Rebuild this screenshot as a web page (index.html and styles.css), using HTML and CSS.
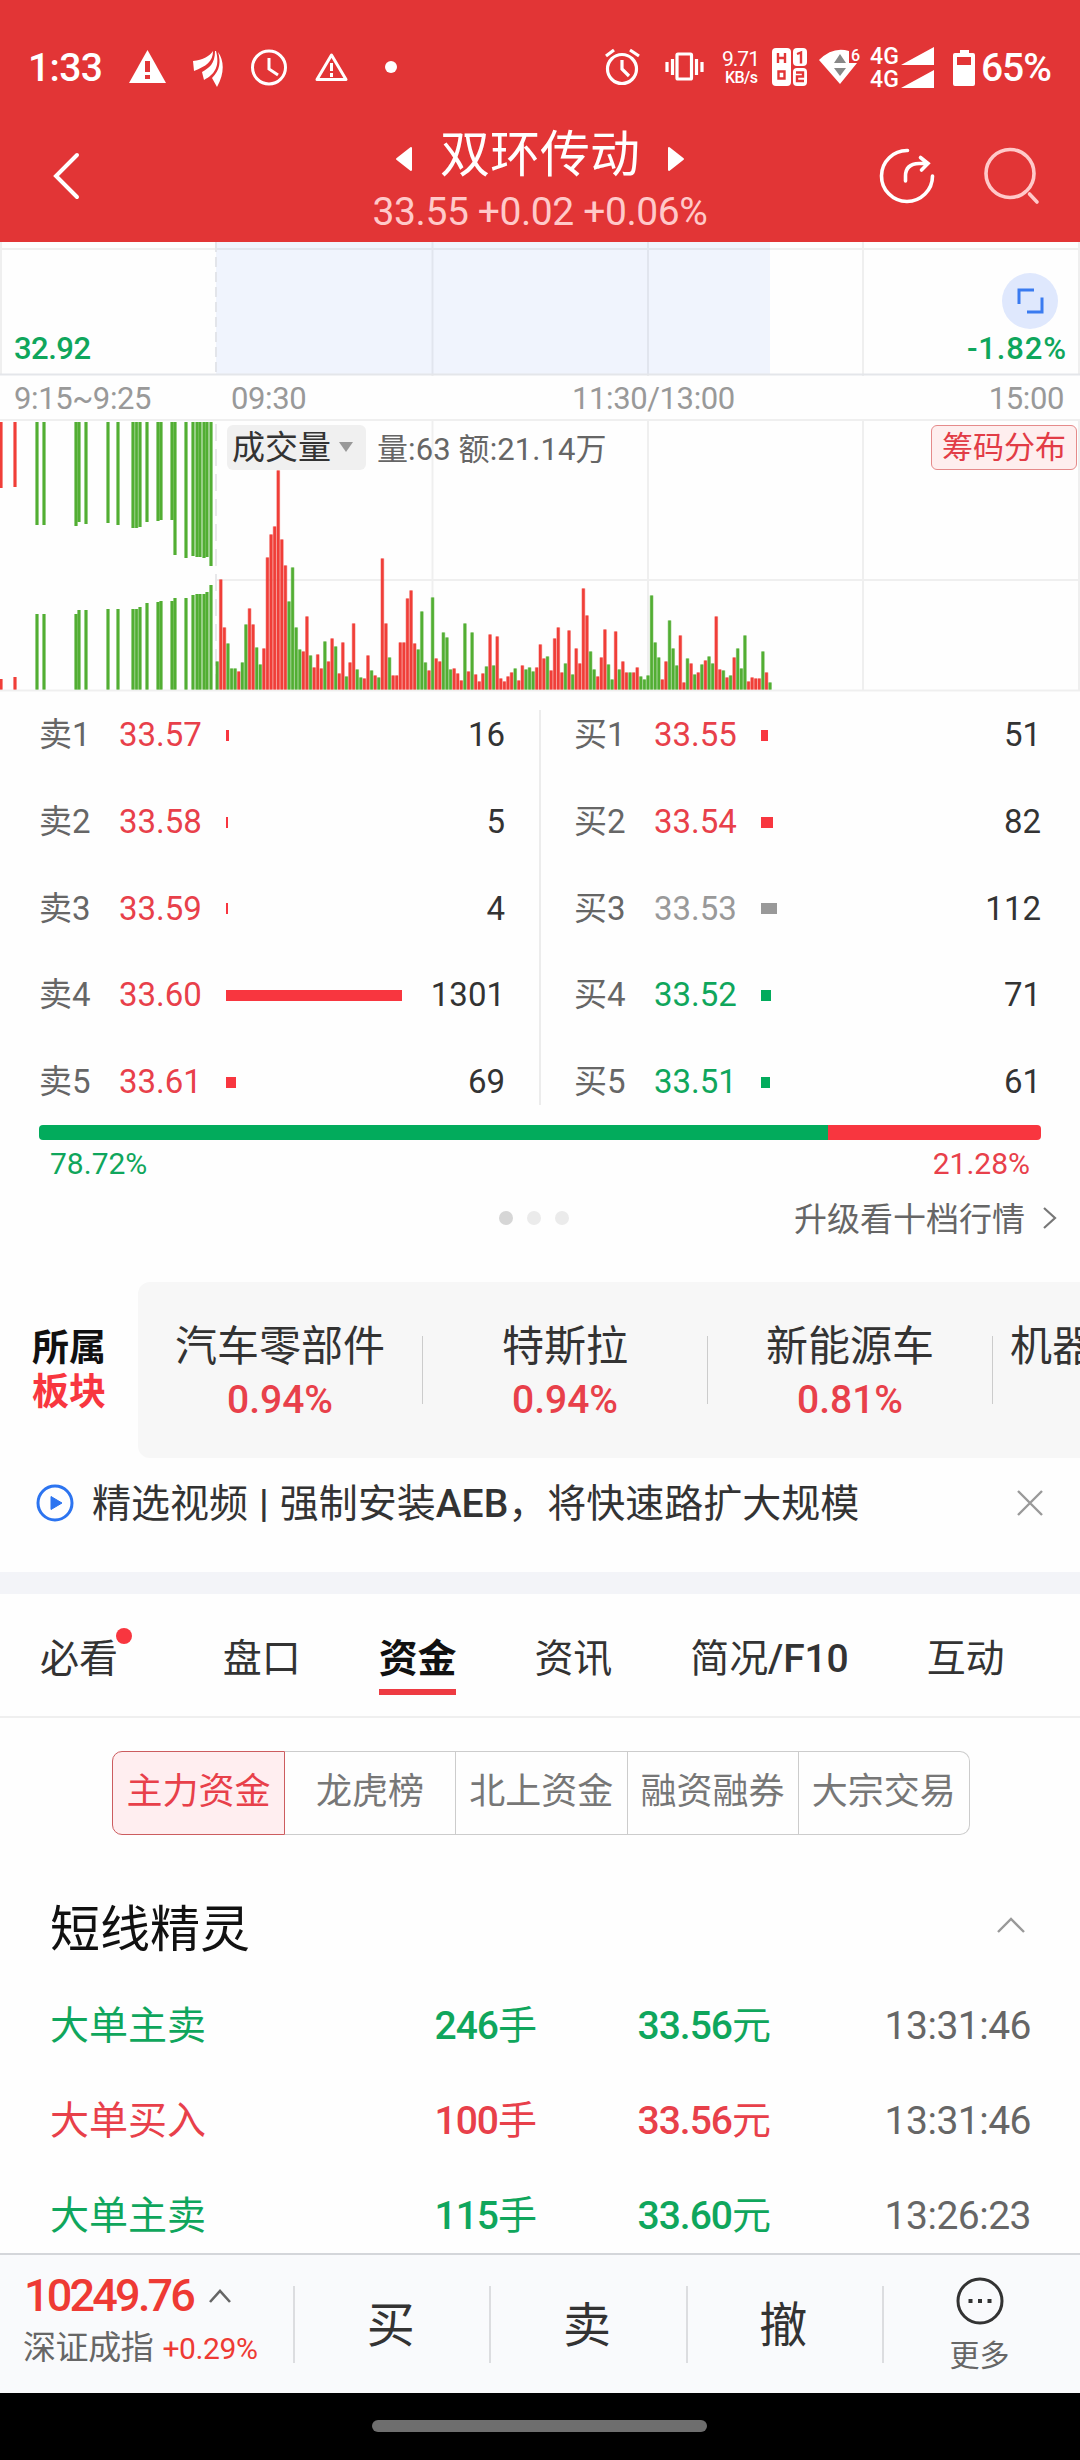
FILE: index.html
```html
<!DOCTYPE html>
<html lang="zh-CN">

<head>
  <meta charset="UTF-8">
  <meta name="viewport" content="width=device-width, initial-scale=1.0">
  <title>双环传动</title>
  <link rel="stylesheet" href="styles.css">
</head>

<body>
  <header class="header">
    <div class="status">
      <span class="time">1:33</span>
      <svg class="status_l" width="280" height="60" viewBox="124 37 280 60">
        <path d="M147.500 50 L166 83 H129 Z" fill="#fff"/>
        <path d="M145 61h5v11h-5z M145 75h5v4h-5z" fill="#e23536"/>
        <path d="M193 61 C203 60 210 56 213 51 C213 62 206 66 194 71 Z" fill="#fff"/>
        <path d="M215 51 C215 64 209 68 202 72 L204 80 C215 74 220 66 216 51 Z" fill="#fff"/>
        <path d="M218 52 C224 60 225 73 217 87 L212 78 C220 70 221 62 218 52 Z" fill="#fff"/>
        <circle cx="269" cy="67.500" r="16.500" fill="none" stroke="#fff" stroke-width="3"/>
        <path d="M269 58v11l9 6" fill="none" stroke="#fff" stroke-width="3"/>
        <path d="M331.500 55 L346 79.500 H317 Z" fill="none" stroke="#fff" stroke-width="3" stroke-linejoin="round"/>
        <path d="M331.500 63v8 M331.500 73v4" stroke="#fff" stroke-width="3"/>
        <circle cx="391" cy="67" r="6" fill="#fff"/>
      </svg>
      <svg class="status_r" width="376" height="60" viewBox="602 37 376 60">
        <g fill="none" stroke="#fff" stroke-width="3.200">
          <circle cx="621" cy="69" r="14.500"/>
          <path d="M621 60v9l7 7 M605 56l8-6 M629 50l9 6"/>
          <rect x="676" y="54" width="14.500" height="25" rx="1"/>
          <path d="M671.500 59v16 M666 62v10 M695.500 59v16 M701 62v10"/>
        </g>
        <text class="net" x="721" y="66" textLength="38">9.71</text>
        <text class="net_s" x="724" y="83" textLength="33">KB/s</text>
        <rect x="771" y="48" width="19" height="38" rx="4" fill="#fff"/>
        <rect x="792" y="48" width="14" height="18" rx="4" fill="#fff"/>
        <rect x="792" y="68" width="14" height="18" rx="4" fill="#fff"/>
        <path d="M777 53v10 M784 53v10 M777 58h7 M777.500 71.500h6v7h-6z M796 54l4-1.500v11 M795 72.500h7v4h-6v4.500h7" fill="none" stroke="#e23536" stroke-width="2.400"/>
        <path d="M818 60 Q832 46 848 51 V63 H856 L839 84 Z" fill="#fff"/>
        <path d="M833 63l6-9 6 9z M833 68h12l-6 8z" fill="#888"/>
        <text class="net_s" x="850" y="61">6</text>
        <text class="net4" x="869" y="64" textLength="29">4G</text>
        <text class="net4" x="869" y="86.500" textLength="29">4G</text>
        <path d="M900 65 L933 47 V65Z M900 88 L933 70 V88Z" fill="#fff"/>
        <path d="M954 53h5v-3h9v3h4a2 2 0 0 1 2 2v29a2 2 0 0 1-2 2h-18a2 2 0 0 1-2-2v-29a2 2 0 0 1 2-2z M956 57v8h14v-8z" fill="#fff" fill-rule="evenodd"/>
      </svg>
      <span class="time battery">65%</span>
    </div>

    <div class="title_bar">
      <svg class="back" width="30" height="50" viewBox="0 0 30 50"><path d="M26 4 L5 25 L26 46" fill="none" stroke="#fff" stroke-width="4" stroke-linecap="round"/></svg>
      <div class="title">
        <h1>
          <svg width="18" height="26" viewBox="0 0 18 26"><path d="M16 2 L2 13 L16 24 Z" fill="#fff" stroke="#fff" stroke-width="2" stroke-linejoin="round"/></svg>
          <span>双环传动</span>
          <svg width="18" height="26" viewBox="0 0 18 26"><path d="M2 2 L16 13 L2 24 Z" fill="#fff" stroke="#fff" stroke-width="2" stroke-linejoin="round"/></svg>
        </h1>
        <p>33.55 +0.02 +0.06%</p>
      </div>
      <svg class="tools" width="170" height="64" viewBox="874 144 170 64" fill="none" stroke="#fff" stroke-width="3.600" stroke-linecap="round">
        <path d="M907.500 150.500 A25.500 25.500 0 1 0 932.500 176"/>
        <path d="M905.500 181 V176 Q905.500 164 919 163.500 H928 M920.500 157.500 L928 163.500 L921.500 170"/>
        <g stroke="#ffc9c9">
          <circle cx="1010" cy="173.500" r="24"/>
          <path d="M1029.500 194 L1037 202"/>
        </g>
      </svg>
    </div>
  </header>

  <!-- 分时图 -->
  <section class="chart">
    <svg class="price" width="1080" height="134" viewBox="0 242 1080 134">
      <rect x="216" y="242" width="554" height="132" fill="#f0f4fd"/>
      <path d="M0 249h1080 M432.500 242v134 M648 242v134 M863 242v134 M1 242v132 M1079 242v132" stroke="#000" stroke-opacity=".06" stroke-width="2"/>
      <path d="M0 374.500h1080" stroke="#e4e6ea" stroke-width="2"/>
      <path d="M216 242v134" stroke="#e3e5ea" stroke-width="2" stroke-dasharray="10 5"/>
      <circle cx="1030" cy="301" r="28" fill="#dfe8fd"/>
      <path d="M1019 304 V290 H1034 M1027 312 H1042 V297.500" fill="none" stroke="#3a7bf0" stroke-width="3"/>
      <text class="num" x="14" y="359" textLength="77">32.92</text>
      <text class="num" x="967" y="359" textLength="99">-1.82%</text>
    </svg>
    <div class="axis">
      <span>9:15~9:25</span>
      <span>09:30</span>
      <span>11:30/13:00</span>
      <span>15:00</span>
    </div>
    <div class="volume">
      <svg id="vol" width="1080" height="273" viewBox="0 419 1080 273">
        <path d="M0 420h1080 M216 580h864 M0 690.500h1080 M432.500 420v270 M648 420v270 M863 420v270 M1079 420v270" stroke="#efefef" stroke-width="2"/>
        <path d="M216 424v266" stroke="#e8e8ea" stroke-width="2" stroke-dasharray="17 8"/>
      </svg>
      <div class="vol_top">
        <span class="pick">成交量<i></i></span>
        <span class="vol_txt">量:63 额:21.14万</span>
        <span class="chip">筹码分布</span>
      </div>
    </div>
  </section>

  <!-- 五档 -->
  <section class="book">
    <ul id="sell"></ul>
    <ul id="buy"></ul>
  </section>
  <div class="ratio"><span class="ratio_g" style="width:78.72%"></span><span class="ratio_r"></span></div>
  <div class="ratio_txt"><span class="g">78.72%</span><span class="r">21.28%</span></div>
  <div class="more_row">
    <div class="dots"><i class="on"></i><i></i><i></i></div>
    <span>升级看十档行情</span>
    <svg width="16" height="26" viewBox="0 0 16 26"><path d="M2 3 L13 13 L2 23" fill="none" stroke="#777" stroke-width="2.200"/></svg>
  </div>

  <!-- 所属板块 -->
  <section class="sector">
    <h3>所属<br><em>板块</em></h3>
    <div class="sector_list">
      <div class="sector_item"><p>汽车零部件</p><b>0.94%</b></div>
      <div class="sector_item"><p>特斯拉</p><b>0.94%</b></div>
      <div class="sector_item"><p>新能源车</p><b>0.81%</b></div>
      <div class="sector_item last"><p>机器</p></div>
    </div>
  </section>

  <div class="news">
    <svg width="38" height="38" viewBox="0 0 38 38"><circle cx="19" cy="19" r="17" fill="none" stroke="#2c74f0" stroke-width="3"/><path d="M15 12.500 L26 19 L15 25.500 Z" fill="#2c74f0" stroke="#2c74f0" stroke-linejoin="round"/></svg>
    <p>精选视频<span class="bar">|</span>强制安装<b>AEB</b>，将快速路扩大规模</p>
    <svg width="28" height="28" viewBox="0 0 28 28"><path d="M2 2 L26 26 M26 2 L2 26" stroke="#999" stroke-width="2.400"/></svg>
  </div>

  <nav class="tabs">
    <span class="dot">必看</span>
    <span>盘口</span>
    <span class="active">资金</span>
    <span>资讯</span>
    <span>简况<b>/F10</b></span>
    <span>互动</span>
  </nav>

  <div class="seg">
    <span class="active">主力资金</span>
    <span>龙虎榜</span>
    <span>北上资金</span>
    <span>融资融券</span>
    <span>大宗交易</span>
  </div>

  <section class="elf">
    <h2>短线精灵 <svg width="30" height="18" viewBox="0 0 30 18"><path d="M2 16 L15 3 L28 16" fill="none" stroke="#999" stroke-width="2.400"/></svg></h2>
    <div class="row g"><span>大单主卖</span><span><b>246</b>手</span><span><b>33.56</b>元</span><time>13:31:46</time></div>
    <div class="row r"><span>大单买入</span><span><b>100</b>手</span><span><b>33.56</b>元</span><time>13:31:46</time></div>
    <div class="row g"><span>大单主卖</span><span><b>115</b>手</span><span><b>33.60</b>元</span><time>13:26:23</time></div>
  </section>

  <footer class="footer">
    <div class="index">
      <p class="point">10249.76<svg width="24" height="16" viewBox="0 0 24 16"><path d="M2 14 L12 3 L22 14" fill="none" stroke="#666" stroke-width="2.600"/></svg></p>
      <p class="index_name">深证成指<span>+0.29%</span></p>
    </div>
    <div class="btn">买</div>
    <div class="btn">卖</div>
    <div class="btn">撤</div>
    <div class="btn etc">
      <svg width="50" height="50" viewBox="0 0 50 50"><circle cx="25" cy="25" r="22" fill="none" stroke="#333" stroke-width="3"/><path d="M13.500 23h4v4h-4z M23 23h4v4h-4z M32.500 23h4v4h-4z" fill="#333"/></svg>
      <span>更多</span>
    </div>
  </footer>
  <div class="home"><i></i></div>

  <script src="script.js"></script>
</body>

</html>
```
FILE: styles.css
```css
* {
  margin: 0;
  padding: 0;
  box-sizing: border-box;
}

body {
  width: 1080px;
  height: 2460px;
  overflow: hidden;
  background: #fefefe;
  color: #333;
  font-family: Roboto, "Noto Sans CJK SC", sans-serif;
  display: flex;
  flex-direction: column;
}

ul {
  list-style: none;
}

i,
em {
  font-style: normal;
}

b {
  font-weight: 500;
}

svg {
  display: block;
  flex: none;
}

.g {
  color: #0fa65c;
}

.r {
  color: #e8404a;
}

/* 顶部 */
.header {
  height: 242px;
  background: #e23536;
  color: #fff;
}

.status {
  height: 134px;
  padding: 0 29px 0 28px;
  display: flex;
  align-items: center;
}

.time {
  width: 96px;
  font-size: 39px;
  font-weight: 500;
  line-height: 60px;
  padding-top: 2px;
  letter-spacing: -0.6px;
}

.battery {
  width: auto;
  margin-left: 2px;
  letter-spacing: -1px;
}

.status_r {
  margin-left: auto;
}

.net {
  font-size: 21px;
  fill: #fff;
}

.net_s {
  font-size: 16px;
  font-weight: 500;
  fill: #fff;
}

.net4 {
  font-size: 23px;
  font-weight: 500;
  fill: #fff;
}

.title_bar {
  height: 108px;
  padding: 0 36px 0 51px;
  display: flex;
}

.back {
  margin-top: 17px;
}

.tools {
  margin: 10px 0 0 auto;
}

.title {
  width: 340px;
  margin-left: 289px;
  text-align: center;
}

.title h1 {
  display: flex;
  align-items: center;
  justify-content: center;
  gap: 27px;
  height: 54px;
  margin-top: -11px;
  font-size: 50px;
  font-weight: 400;
}

.title h1 svg {
  margin-top: 18px;
}

.title p {
  margin-top: 12px;
  font-size: 39px;
  line-height: 46px;
  letter-spacing: -0.4px;
  color: #ffc9c9;
  white-space: nowrap;
}

/* 图表 */
.num {
  font-size: 31px;
  font-weight: 500;
  fill: #0fa65c;
}

.axis {
  height: 43px;
  padding: 0 16px 0 14px;
  display: grid;
  grid-template-columns: 217px 341px 1fr auto;
  font-size: 31px;
  line-height: 46px;
  letter-spacing: -0.4px;
  color: #999;
}

.volume {
  position: relative;
}

.vol_top {
  position: absolute;
  left: 227px;
  right: 3px;
  top: 5px;
  height: 46px;
  display: flex;
  align-items: center;
}

.pick {
  display: flex;
  align-items: center;
  gap: 8px;
  width: 139px;
  height: 45px;
  padding-left: 5px;
  background: #f0f0f0;
  border-radius: 6px;
  font-size: 33px;
  line-height: 47px;
}

.pick i {
  border: 7px solid transparent;
  border-top: 10px solid #999;
  border-bottom: 0;
}

.vol_txt {
  margin: -2px 0 0 11px;
  font-size: 31px;
  letter-spacing: 0.1px;
  color: #666;
}

.chip {
  margin-left: auto;
  width: 146px;
  height: 45px;
  border: 1px solid #e58a8a;
  border-radius: 6px;
  background: #feeeee;
  color: #e23c46;
  font-size: 31px;
  line-height: 43px;
  text-align: center;
}

/* 五档 */
.book {
  height: 433px;
  display: grid;
  grid-template-columns: 541px 539px;
}

.book ul {
  margin-top: 18px;
  height: 395px;
}

.book ul:first-child {
  padding: 0 34px 0 39px;
  border-right: 2px solid #ececec;
}

.book ul:last-child {
  padding: 0 39px 0 33px;
}

.book li {
  display: grid;
  grid-template-columns: 80px 107px 1fr auto;
  align-items: center;
  height: 86.7px;
  font-size: 33px;
  line-height: 48px;
  position: relative;
  top: -18px;
  color: #333;
}

.book .lv {
  color: #666;
}

.book .qty {
  height: 11px;
}

.red {
  color: #e8404a;
}

.green {
  color: #0fa65c;
}

.gray {
  color: #999;
}

.qty.red {
  background: #f8363f;
}

.qty.green {
  background: #02ab5c;
}

.qty.gray {
  background: #999;
}

.ratio {
  display: flex;
  height: 15px;
  margin: 0 39px;
  border-radius: 4px;
  overflow: hidden;
}

.ratio_g {
  background: #02ab5c;
}

.ratio_r {
  flex: 1;
  background: #f8363f;
}

.ratio_txt {
  display: flex;
  justify-content: space-between;
  padding: 0 50px;
  font-size: 30px;
  line-height: 48px;
}

.more_row {
  display: flex;
  align-items: center;
  justify-content: flex-end;
  height: 60px;
  padding-right: 22px;
  font-size: 33px;
  color: #666;
}

.more_row span {
  margin-top: -2px;
}

.more_row svg {
  margin-left: 17px;
}

.dots {
  display: flex;
  gap: 14px;
  margin-right: 225px;
}

.dots i {
  width: 14px;
  height: 14px;
  border-radius: 50%;
  background: #ebebeb;
}

.dots .on {
  background: #d6d6d6;
}

/* 板块 */
.sector {
  display: flex;
  height: 176px;
  margin-top: 34px;
}

.sector h3 {
  width: 138px;
  padding: 45px 0 0 32px;
  font-size: 37px;
  font-weight: 700;
  line-height: 44px;
  color: #111;
}

.sector em {
  color: #f8363f;
}

.sector_list {
  width: 942px;
  display: flex;
  background: #f7f7f7;
  border-radius: 12px 0 0 12px;
  overflow: hidden;
}

.sector_item {
  flex: none;
  width: 285px;
  height: 68px;
  margin-top: 54px;
  border-right: 1px solid #ccc;
  text-align: center;
}

.sector_item p {
  margin-top: -19px;
  font-size: 42px;
  line-height: 60px;
}

.sector_item b {
  display: block;
  font-size: 39px;
  line-height: 46px;
  color: #e8404a;
}

.sector_item.last {
  padding-left: 17px;
  border: 0;
  width: 160px;
  text-align: left;
}

/* 资讯条 */
.news {
  display: flex;
  align-items: center;
  height: 114px;
  padding: 0 36px 24px;
}

.news p {
  margin: 2px auto 0 18px;
  font-size: 39px;
  line-height: 56px;
}

.news .bar {
  margin: 0 11px;
  font-weight: 500;
}

/* tab */
.tabs {
  display: flex;
  gap: 78px;
  height: 146px;
  padding: 33px 39px 0 40px;
  border-top: 22px solid #f3f4f8;
  border-bottom: 2px solid #efefef;
  font-size: 39px;
  line-height: 65px;
  letter-spacing: -0.1px;
}

.tabs span {
  position: relative;
  height: 68px;
}

.tabs .dot {
  margin-right: 27px;
}

.tabs .dot::after {
  content: "";
  position: absolute;
  right: -14px;
  top: 1px;
  width: 16px;
  height: 16px;
  border-radius: 50%;
  background: #f8363f;
}

.tabs .active {
  font-weight: 700;
  color: #111;
  border-bottom: 6px solid #ee3b42;
}

.seg {
  display: flex;
  width: 858px;
  height: 84px;
  margin: 33px 0 0 112px;
  font-size: 36px;
  line-height: 81px;
  text-align: center;
  color: #777;
}

.seg span {
  flex: 1;
  border: 1px solid #ccc;
  border-left: 0;
}

.seg .active {
  flex: 0 0 173px;
  border: 1px solid #cc5c5f;
  border-radius: 10px 0 0 10px;
  background: #ffeef0;
  color: #e8404a;
}

.seg span:last-child {
  border-radius: 0 10px 10px 0;
}

/* 短线精灵 */
.elf {
  flex: 1;
  padding: 45px 49px 0 50px;
  overflow: hidden;
}

.elf h2 {
  display: flex;
  align-items: center;
  justify-content: space-between;
  height: 90px;
  padding-right: 5px;
  font-size: 50px;
  font-weight: 400;
  color: #111;
}

.row {
  display: grid;
  grid-template-columns: 300px 186px 234px 1fr;
  height: 95px;
  font-size: 39px;
  line-height: 113px;
  letter-spacing: -1px;
  text-align: right;
}

.row span:first-child {
  text-align: left;
  letter-spacing: 0;
}

.row time {
  letter-spacing: -0.5px;
  color: #666;
}

/* 底部 */
.footer {
  display: flex;
  height: 140px;
  background: #f9fafc;
  border-top: 2px solid #d4d6da;
  align-items: center;
}

.index {
  width: 293px;
  padding-left: 24px;
}

.point {
  display: flex;
  align-items: center;
  gap: 15px;
  font-size: 45px;
  font-weight: 500;
  line-height: 50px;
  letter-spacing: -2.8px;
  margin-top: -3px;
  color: #ee3a34;
}

.index_name {
  margin: 2px 0 0 -1px;
  font-size: 33px;
  line-height: 50px;
  letter-spacing: -0.4px;
  white-space: nowrap;
  color: #666;
}

.index_name span {
  margin-left: 9px;
  font-size: 30px;
  color: #ee3a34;
}

.btn {
  width: 196.300px;
  height: 77px;
  border-left: 2px solid #dcdde0;
  padding-right: 3px;
  text-align: center;
  font-size: 48px;
  line-height: 79px;
}

.etc {
  display: flex;
  flex-direction: column;
  align-items: center;
}

.etc svg {
  margin-top: -10px;
}

.etc span {
  font-size: 30px;
  line-height: 60px;
  color: #666;
}

.home {
  height: 67px;
  background: #000;
}

.home i {
  display: block;
  width: 335px;
  height: 12px;
  margin: 27px 0 0 372px;
  border-radius: 6px;
  background: #6e6e6e;
}
```
FILE: script.js
```js
const RED = '#f03e38';
const GREEN = '#52ae33';
const svg = document.getElementById('vol');

// 画一根柱子，浅色底 + 深色芯
function bar(x, y1, y2, color) {
  [[3.8, 0.45], [2.6, 1]].forEach(([w, o]) => {
    const el = document.createElementNS('http://www.w3.org/2000/svg', 'rect');
    el.setAttribute('x', x - w / 2);
    el.setAttribute('y', y1);
    el.setAttribute('width', w);
    el.setAttribute('height', y2 - y1);
    el.setAttribute('fill', color);
    el.setAttribute('opacity', o);
    svg.appendChild(el);
  });
}

// 集合竞价 [x, 上柱底, 下柱顶]
const auction = [
  [1, 488, 679], [15, 487, 677], [37, 525, 614], [44, 525, 614], [76, 526, 614], [79, 522, 610],
  [86, 524, 610], [108, 523, 609], [118, 525, 609], [133, 528, 609], [136.500, 528, 609], [140, 527, 607],
  [147, 522, 603], [158, 521, 602], [161, 520, 601], [172, 520, 601], [175, 555, 598], [186, 558, 598],
  [193, 556, 595], [197, 557, 594], [200, 557, 594], [204, 558, 594], [207, 557, 592], [211, 566, 585]
];
auction.forEach(([x, a, b], i) => {
  const c = i < 2 ? RED : GREEN;
  bar(x, 422, a, c);
  bar(x, b, 689.5, c);
});

// 每分钟成交量
const minutes = `g28 r110 r62 g46 g21 g21 r18 g27 g65 r81
r65 g42 g25 r41 r132 r155 r163 r219 r150 r124
g88 g122 g62 g40 r38 r73 g34 r22 r35 r21
g48 r28 r51 g43 r16 r47 g13 r27 r66 g20
g12 r11 r34 g19 r14 g12 r131 r66 g32 r14
r14 r47 r47 r91 r99 r46 g40 g78 g27 r19
g92 r31 r28 g57 g52 g20 r21 r16 r9 g66
r18 g57 r15 r8 r16 g23 r55 g24 r53 r11
r8 r13 r17 g21 r9 r24 g20 g22 g18 r22
r45 r31 g33 r19 r51 r62 r17 g26 r59 g15
r41 r26 r101 r74 g38 g20 r13 r32 r60 g25
g10 r58 g20 r28 r17 g17 r17 r22 g13 g10
g14 g94 g47 g32 r10 r28 g69 g41 g24 r54
r7 g31 r26 g15 r17 g25 r29 g33 g26 r73
r20 g19 r12 g14 r32 g41 g21 g54 r8 r12
r11 r11 g38 r17 g7`.split(/\s+/);
minutes.forEach((m, i) => {
  bar(217.2 + i * 3.59, 689.5 - Number(m.slice(1)), 689.5, m[0] === 'r' ? RED : GREEN);
});

// 五档 [档位, 价格, 数量, 柱宽, 颜色]
const sell = [
  ['卖1', '33.57', 16, 2.5, 'red'],
  ['卖2', '33.58', 5, 2, 'red'],
  ['卖3', '33.59', 4, 2, 'red'],
  ['卖4', '33.60', 1301, 176, 'red'],
  ['卖5', '33.61', 69, 10, 'red']
];
const buy = [
  ['买1', '33.55', 51, 7, 'red'],
  ['买2', '33.54', 82, 12, 'red'],
  ['买3', '33.53', 112, 16, 'gray'],
  ['买4', '33.52', 71, 10, 'green'],
  ['买5', '33.51', 61, 9, 'green']
];

function render(id, list) {
  document.getElementById(id).innerHTML = list.map(([lv, price, num, w, c]) =>
    `<li><span class="lv">${lv}</span><span class="${c}">${price}</span><span class="qty ${c}" style="width:${w}px"></span><span>${num}</span></li>`
  ).join('');
}
render('sell', sell);
render('buy', buy);
```
